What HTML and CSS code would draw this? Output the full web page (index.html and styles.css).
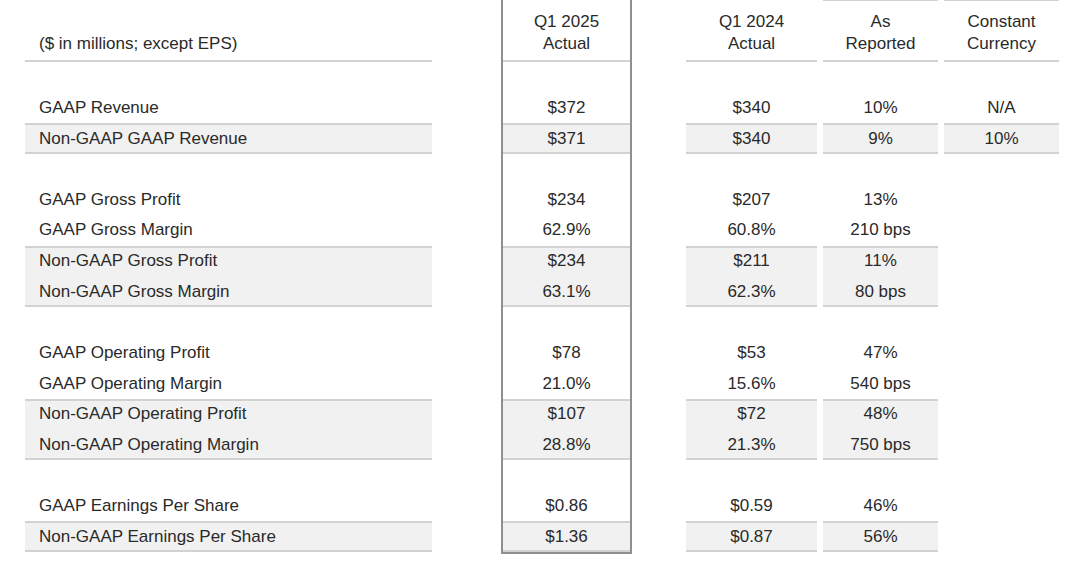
FILE: index.html
```html
<!DOCTYPE html>
<html lang="en">
<head>
<meta charset="utf-8">
<title>Q1 2025 Financial Summary</title>
<link rel="stylesheet" href="styles.css">
</head>
<body>
<div class="table">
  <div class="col c-label">
    <div class="head">($ in millions; except EPS)</div>
    <div class="r"></div>
    <div class="r">GAAP Revenue</div>
    <div class="blk sh"><div class="r">Non-GAAP GAAP Revenue</div></div>
    <div class="r"></div>
    <div class="r">GAAP Gross Profit</div>
    <div class="r">GAAP Gross Margin</div>
    <div class="blk sh"><div class="r">Non-GAAP Gross Profit</div><div class="r">Non-GAAP Gross Margin</div></div>
    <div class="r"></div>
    <div class="r">GAAP Operating Profit</div>
    <div class="r">GAAP Operating Margin</div>
    <div class="blk sh"><div class="r">Non-GAAP Operating Profit</div><div class="r">Non-GAAP Operating Margin</div></div>
    <div class="r"></div>
    <div class="r">GAAP Earnings Per Share</div>
    <div class="blk sh"><div class="r">Non-GAAP Earnings Per Share</div></div>
  </div>

  <div class="col c-cur">
    <div class="head"><span>Q1 2025</span><span>Actual</span></div>
    <div class="r"></div>
    <div class="r">$372</div>
    <div class="blk sh"><div class="r">$371</div></div>
    <div class="r"></div>
    <div class="r">$234</div>
    <div class="r">62.9%</div>
    <div class="blk sh"><div class="r">$234</div><div class="r">63.1%</div></div>
    <div class="r"></div>
    <div class="r">$78</div>
    <div class="r">21.0%</div>
    <div class="blk sh"><div class="r">$107</div><div class="r">28.8%</div></div>
    <div class="r"></div>
    <div class="r">$0.86</div>
    <div class="blk sh"><div class="r">$1.36</div></div>
  </div>

  <div class="col c-prior">
    <div class="head"><span>Q1 2024</span><span>Actual</span></div>
    <div class="r"></div>
    <div class="r">$340</div>
    <div class="blk sh"><div class="r">$340</div></div>
    <div class="r"></div>
    <div class="r">$207</div>
    <div class="r">60.8%</div>
    <div class="blk sh"><div class="r">$211</div><div class="r">62.3%</div></div>
    <div class="r"></div>
    <div class="r">$53</div>
    <div class="r">15.6%</div>
    <div class="blk sh"><div class="r">$72</div><div class="r">21.3%</div></div>
    <div class="r"></div>
    <div class="r">$0.59</div>
    <div class="blk sh"><div class="r">$0.87</div></div>
  </div>

  <div class="col c-ar">
    <div class="head top"><span>As</span><span>Reported</span></div>
    <div class="r"></div>
    <div class="r">10%</div>
    <div class="blk sh"><div class="r">9%</div></div>
    <div class="r"></div>
    <div class="r">13%</div>
    <div class="r">210 bps</div>
    <div class="blk sh"><div class="r">11%</div><div class="r">80 bps</div></div>
    <div class="r"></div>
    <div class="r">47%</div>
    <div class="r">540 bps</div>
    <div class="blk sh"><div class="r">48%</div><div class="r">750 bps</div></div>
    <div class="r"></div>
    <div class="r">46%</div>
    <div class="blk sh"><div class="r">56%</div></div>
  </div>

  <div class="col c-cc">
    <div class="head top"><span>Constant</span><span>Currency</span></div>
    <div class="r"></div>
    <div class="r">N/A</div>
    <div class="blk sh"><div class="r">10%</div></div>
  </div>
</div>
</body>
</html>
```

FILE: styles.css
```css
html, body {
  margin: 0;
  padding: 0;
  background: #ffffff;
}

.table {
  display: flex;
  align-items: flex-start;
  padding-left: 25px;
  font-family: "Liberation Sans", Arial, sans-serif;
  font-size: 17px;
  color: #2a2a2a;
}

.col {
  display: flex;
  flex-direction: column;
  flex: none;
}

.c-label {
  width: 407px;
  margin-right: 69px;
}

.c-cur {
  width: 127px;
  margin-right: 54px;
  border-left: 2px solid #8f8f8f;
  border-right: 2px solid #8f8f8f;
  border-bottom: 2px solid #8f8f8f;
}

.c-prior {
  width: 131px;
  margin-right: 6px;
}

.c-ar {
  width: 115px;
  margin-right: 6px;
}

.c-cc {
  width: 115px;
}

.head {
  box-sizing: border-box;
  height: 62px;
  display: flex;
  flex-direction: column;
  justify-content: flex-end;
  align-items: center;
  padding-bottom: 5px;
  line-height: 22px;
  text-align: center;
  border-bottom: 2px solid #d2d2d2;
}

.head.top {
  border-top: 1px solid #d2d2d2;
}

.c-label .head {
  align-items: flex-start;
  padding-left: 14px;
}

.r {
  height: 30.625px;
  display: flex;
  align-items: center;
  justify-content: center;
  white-space: nowrap;
}

.c-label .r {
  justify-content: flex-start;
  padding-left: 14px;
}

.blk {
  display: flex;
  flex-direction: column;
}

.blk.sh {
  background: #f1f1f1;
  box-shadow: inset 0 2px 0 #d2d2d2, inset 0 -2px 0 #d2d2d2;
}
```
